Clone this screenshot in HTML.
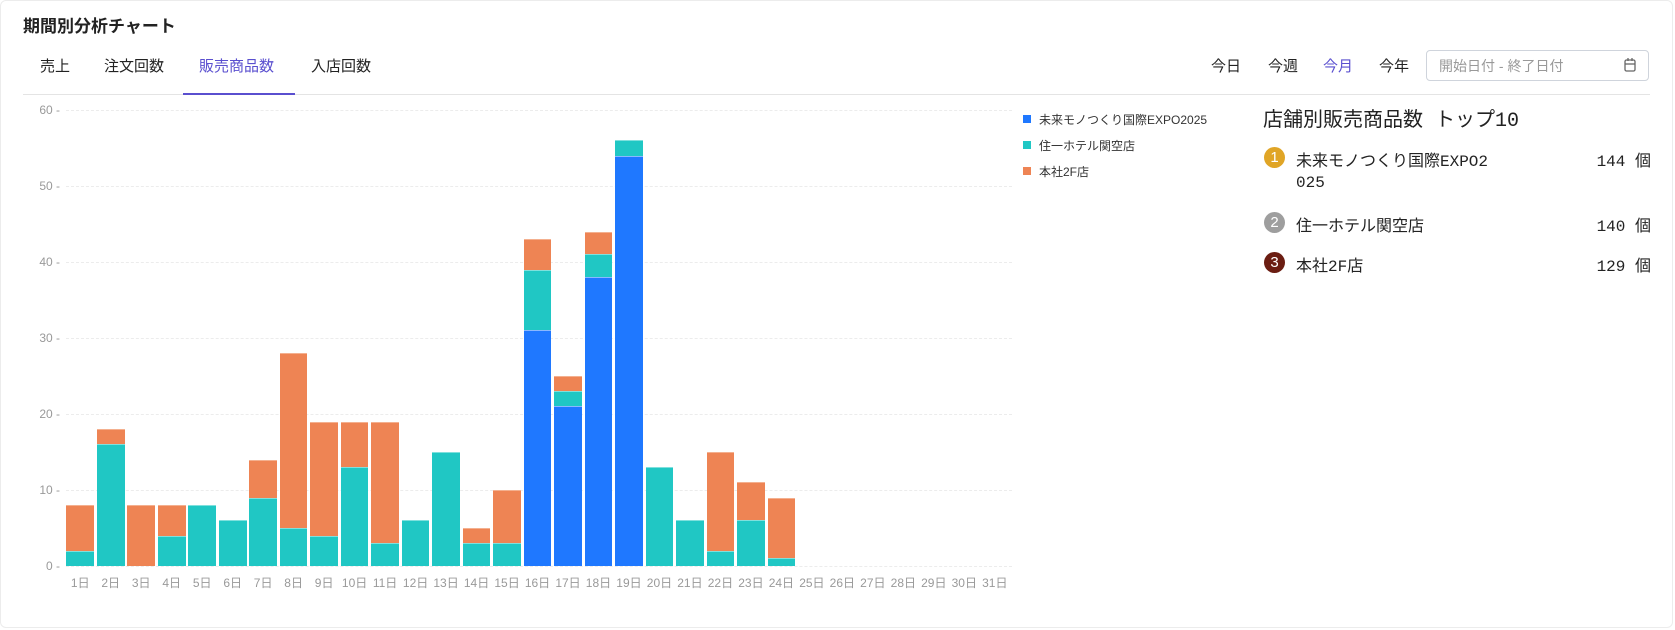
<!DOCTYPE html>
<html><head><meta charset="utf-8"><style>
*{margin:0;padding:0;box-sizing:border-box}
body{width:1675px;height:630px;background:#fff;font-family:"Liberation Sans","Noto Sans CJK JP",sans-serif;color:#222;position:relative;overflow:hidden}
.card{position:absolute;left:0;top:0;width:1673px;height:628px;border:1px solid #ececec;border-radius:6px}
.a{position:absolute;white-space:nowrap}
.tab{position:absolute;top:55px;font-size:15px;color:#222}
.yl{position:absolute;left:30px;width:30px;text-align:right;font-size:12px;color:#999;line-height:12px}
.gl{position:absolute;left:66px;width:946px;border-top:1px dashed #ececec}
.plot{position:absolute;left:65px;top:110px;width:945px;height:456px;display:flex;align-items:flex-end}
.s{flex:1;padding:0 1.4px;display:flex;flex-direction:column;justify-content:flex-end}
.s div{width:100%}
.o{background:#ee8454;border-top:1px solid #f4b08f}
.t{background:#20c7c4;border-top:1px solid #7fe0dd}
.b{background:#1f78ff;border-top:1px solid #8ab8ff}
.xl{position:absolute;left:65px;top:574px;width:945px;display:flex}
.xl span{flex:1;text-align:center;font-size:12px;color:#999}
.lg{position:absolute;left:1023px;font-size:12px;color:#333}
.lg i{position:absolute;left:0;top:3px;width:8px;height:8px}
.lg span{position:absolute;left:16px;top:-1px;white-space:nowrap}
.c{position:absolute;left:1264px;width:21px;height:21px;border-radius:50%;color:#fff;font-size:15px;text-align:center;line-height:21px}
.it{position:absolute;left:1296px;font-size:16px;color:#222;font-family:"Liberation Mono","Noto Sans CJK JP",monospace}
.v{position:absolute;right:24px;font-size:16px;font-family:"Liberation Mono","Noto Sans CJK JP",monospace}
</style></head><body>
<div class="card"></div>
<div class="a" style="left:23px;top:12px;font-size:17px;font-weight:bold">期間別分析チャート</div>
<div class="tab" style="left:40px">売上</div>
<div class="tab" style="left:104px">注文回数</div>
<div class="tab" style="left:199px;color:#5a4fcf">販売商品数</div>
<div class="tab" style="left:311px">入店回数</div>
<div class="a" style="left:23px;top:94px;width:1627px;border-top:1px solid #e4e4e4"></div>
<div class="a" style="left:183px;top:93px;width:112px;border-top:2px solid #5a4fcf"></div>
<div class="tab" style="left:1211px">今日</div>
<div class="tab" style="left:1268px">今週</div>
<div class="tab" style="left:1323px;color:#5a4fcf">今月</div>
<div class="tab" style="left:1379px">今年</div>
<div class="a" style="left:1426px;top:50px;width:223px;height:31px;border:1px solid #cfd4dc;border-radius:4px"></div>
<div class="a" style="left:1439px;top:56px;font-size:14px;color:#999">開始日付 - 終了日付</div>
<svg class="a" style="left:1623px;top:57px" width="14" height="16" viewBox="0 0 14 16"><rect x="2" y="3" width="10" height="11" rx="1.5" fill="none" stroke="#666" stroke-width="1.3"/><line x1="2" y1="7" x2="12" y2="7" stroke="#666" stroke-width="1.3"/><line x1="5" y1="1" x2="5" y2="4" stroke="#666" stroke-width="1.3"/><line x1="9" y1="1" x2="9" y2="4" stroke="#666" stroke-width="1.3"/></svg>

<div class="gl" style="top:110px"></div><div class="yl" style="top:104px">60 -</div>
<div class="gl" style="top:186px"></div><div class="yl" style="top:180px">50 -</div>
<div class="gl" style="top:262px"></div><div class="yl" style="top:256px">40 -</div>
<div class="gl" style="top:338px"></div><div class="yl" style="top:332px">30 -</div>
<div class="gl" style="top:414px"></div><div class="yl" style="top:408px">20 -</div>
<div class="gl" style="top:490px"></div><div class="yl" style="top:484px">10 -</div>
<div class="gl" style="top:566px"></div><div class="yl" style="top:560px">0 -</div>

<div class="plot">
<div class="s"><div class="o" style="height:45.6px"></div><div class="t" style="height:15.2px"></div></div>
<div class="s"><div class="o" style="height:15.2px"></div><div class="t" style="height:121.6px"></div></div>
<div class="s"><div class="o" style="height:60.8px"></div></div>
<div class="s"><div class="o" style="height:30.4px"></div><div class="t" style="height:30.4px"></div></div>
<div class="s"><div class="t" style="height:60.8px"></div></div>
<div class="s"><div class="t" style="height:45.6px"></div></div>
<div class="s"><div class="o" style="height:38px"></div><div class="t" style="height:68.4px"></div></div>
<div class="s"><div class="o" style="height:174.8px"></div><div class="t" style="height:38px"></div></div>
<div class="s"><div class="o" style="height:114px"></div><div class="t" style="height:30.4px"></div></div>
<div class="s"><div class="o" style="height:45.6px"></div><div class="t" style="height:98.8px"></div></div>
<div class="s"><div class="o" style="height:121.6px"></div><div class="t" style="height:22.8px"></div></div>
<div class="s"><div class="t" style="height:45.6px"></div></div>
<div class="s"><div class="t" style="height:114px"></div></div>
<div class="s"><div class="o" style="height:15.2px"></div><div class="t" style="height:22.8px"></div></div>
<div class="s"><div class="o" style="height:53.2px"></div><div class="t" style="height:22.8px"></div></div>
<div class="s"><div class="o" style="height:30.4px"></div><div class="t" style="height:60.8px"></div><div class="b" style="height:235.6px"></div></div>
<div class="s"><div class="o" style="height:15.2px"></div><div class="t" style="height:15.2px"></div><div class="b" style="height:159.6px"></div></div>
<div class="s"><div class="o" style="height:22.8px"></div><div class="t" style="height:22.8px"></div><div class="b" style="height:288.8px"></div></div>
<div class="s"><div class="t" style="height:15.2px"></div><div class="b" style="height:410.4px"></div></div>
<div class="s"><div class="t" style="height:98.8px"></div></div>
<div class="s"><div class="t" style="height:45.6px"></div></div>
<div class="s"><div class="o" style="height:98.8px"></div><div class="t" style="height:15.2px"></div></div>
<div class="s"><div class="o" style="height:38px"></div><div class="t" style="height:45.6px"></div></div>
<div class="s"><div class="o" style="height:60.8px"></div><div class="t" style="height:7.6px"></div></div>
<div class="s"></div><div class="s"></div><div class="s"></div><div class="s"></div><div class="s"></div><div class="s"></div><div class="s"></div>
</div>
<div class="xl"><span>1日</span><span>2日</span><span>3日</span><span>4日</span><span>5日</span><span>6日</span><span>7日</span><span>8日</span><span>9日</span><span>10日</span><span>11日</span><span>12日</span><span>13日</span><span>14日</span><span>15日</span><span>16日</span><span>17日</span><span>18日</span><span>19日</span><span>20日</span><span>21日</span><span>22日</span><span>23日</span><span>24日</span><span>25日</span><span>26日</span><span>27日</span><span>28日</span><span>29日</span><span>30日</span><span>31日</span></div>

<div class="lg" style="top:112px"><i style="background:#1f78ff"></i><span>未来モノつくり国際EXPO2025</span></div>
<div class="lg" style="top:138px"><i style="background:#20c7c4"></i><span>住一ホテル関空店</span></div>
<div class="lg" style="top:164px"><i style="background:#ee8454"></i><span>本社2F店</span></div>

<div class="a" style="left:1263px;top:103px;font-size:20px;font-family:'Liberation Mono','Noto Sans CJK JP',monospace">店舗別販売商品数 トップ10</div>
<div class="c" style="top:147px;background:#e0a526">1</div>
<div class="it" style="top:147px">未来モノつくり国際EXPO2</div>
<div class="it" style="top:174px">025</div>
<div class="v" style="top:147px">144 個</div>
<div class="c" style="top:212px;background:#9e9e9e">2</div>
<div class="it" style="top:212px">住一ホテル関空店</div>
<div class="v" style="top:212px">140 個</div>
<div class="c" style="top:252px;background:#6b1d12">3</div>
<div class="it" style="top:252px">本社2F店</div>
<div class="v" style="top:252px">129 個</div>
</body></html>
